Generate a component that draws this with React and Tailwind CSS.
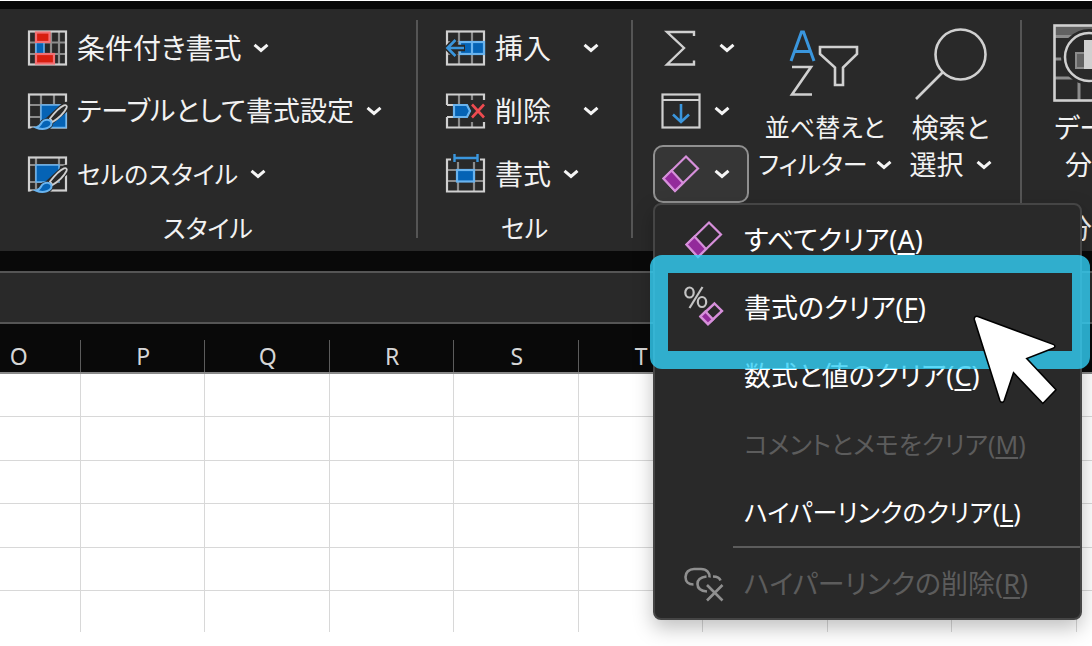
import React from "react";

const LIGHT = "#d0d0d0";
const MID = "#8c8c8c";
const BLUE = "#0563b5";
const SKY = "#69b3ee";
const DARK = "#292929";

function Chevron() {
  return (
    <svg viewBox="0 0 16 10" className="h-[10px] w-4 shrink-0" fill="none" stroke="#f5f5f5" strokeWidth="3">
      <path d="M1.5 1.8 8 7.5 14.5 1.8" />
    </svg>
  );
}

function GridIcon({ children }) {
  return (
    <svg viewBox="0 0 40 40" className="size-10 shrink-0 overflow-visible" fill="none" strokeWidth="2.2">
      {children}
    </svg>
  );
}

function Brush() {
  return (
    <g>
      <path d="M40 12.500c-3-1-6 1.500-9 4.500L18 29c-3 0-5 2-6 5-1 2-3 3-5 3.500 8 3 16 1 17-6L40 18z" fill={DARK} stroke={DARK} strokeWidth="3" />
      <path d="M22 27.500C27 21 32 16 36 14.300c2-.8 3.500.7 2.500 2.700C36 22 31 27 24.500 31z" fill={DARK} stroke={LIGHT} strokeWidth="1.8" />
      <path d="M8 36.500c4-.5 4.500-3 6-5.500 2.500-3.500 9-3 9.500.8.3 5-8 8-15.500 4.700z" fill={BLUE} stroke={SKY} strokeWidth="2" />
    </g>
  );
}

function ConditionalIcon() {
  return (
    <GridIcon>
      <path d="M8 3v34M23 3v34M31 3v34M1 14.500h38M1 26h38" stroke={MID} />
      <rect x="1" y="3.500" width="37" height="33" stroke={LIGHT} />
      <rect x="8" y="14.500" width="8" height="11.500" fill={BLUE} stroke={SKY} strokeWidth="1.500" />
      <rect x="8" y="4.500" width="13.500" height="9.500" fill="#d81e10" stroke="#f26f73" />
      <rect x="8" y="26" width="18" height="9.500" fill="#d81e10" stroke="#f26f73" />
    </GridIcon>
  );
}

function TableStyleIcon() {
  return (
    <GridIcon>
      <path d="M13 3v34M26 3v12M1 14h38M1 26h14" stroke={MID} />
      <rect x="1" y="3.500" width="37" height="33" stroke={LIGHT} />
      <rect x="13" y="14" width="25" height="22.500" fill={BLUE} stroke={SKY} strokeWidth="1.500" />
      <Brush />
    </GridIcon>
  );
}

function CellStyleIcon() {
  return (
    <GridIcon>
      <path d="M8 3v34M31 3v10M1 11h38M1 28h14" stroke={MID} />
      <rect x="1" y="3.500" width="37" height="33" stroke={LIGHT} />
      <rect x="8" y="11" width="23" height="17" fill={BLUE} stroke={SKY} strokeWidth="1.500" />
      <Brush />
    </GridIcon>
  );
}

function InsertIcon() {
  return (
    <GridIcon>
      <path d="M13 3v34M26 3v34M1 14h38M1 26h38" stroke={MID} />
      <rect x="1" y="3.500" width="37" height="33" stroke={LIGHT} />
      <rect x="14" y="14" width="24" height="12" fill={BLUE} stroke={SKY} />
      <path d="M26 14v12" stroke={SKY} />
      <path d="M19 20H3M10 12 2 20l8 8" stroke={DARK} strokeWidth="6.500" />
      <path d="M18 20H2M9.500 12 1.500 20l8 8" stroke="#3a96dd" strokeWidth="2.600" />
    </GridIcon>
  );
}

function DeleteIcon() {
  return (
    <GridIcon>
      <path d="M13 4v10M13 26v10M26 4v5M26 31v5" stroke={MID} />
      <path d="M1 14V3.500h37V9M1 14h13M1 26v10.500h37V31M1 26h13" stroke={LIGHT} />
      <path d="M8 14h13l3 6-3 6H8z" fill={BLUE} stroke={SKY} />
      <path d="m26 13.500 12 13M38 13.500l-12 13" stroke="#ef4b50" strokeWidth="2.600" />
    </GridIcon>
  );
}

function FormatIcon() {
  return (
    <GridIcon>
      <path d="M12 8v30M28 8v30M1 16h38M1 27h38" stroke={MID} />
      <path d="M5 5.500H1v32h37v-32h-4" stroke={LIGHT} />
      <rect x="11" y="16" width="17" height="11.500" fill={BLUE} stroke={SKY} />
      <path d="M8.500 0v8M31.500 0v8M8.500 4h23" stroke="#3a96dd" strokeWidth="2.400" />
    </GridIcon>
  );
}

function SigmaIcon() {
  return (
    <GridIcon>
      <path d="M33 8V4H6l17 16L6 36.500h27v-4" stroke={LIGHT} strokeWidth="2.400" />
    </GridIcon>
  );
}

function FillIcon() {
  return (
    <GridIcon>
      <rect x="1.500" y="3.500" width="37" height="33" stroke={LIGHT} />
      <path d="M1.500 9h37" stroke={LIGHT} />
      <path d="M20 13v18M12 23.500l8 7.500 8-7.500" stroke="#3a96dd" strokeWidth="2.600" />
    </GridIcon>
  );
}

function EraserIcon() {
  return (
    <GridIcon>
      <g stroke="#d68fda" strokeWidth="2.200">
        <path d="M25 2.500 37 14.500 14 37 2.500 24.500z" />
        <path d="M10.500 16.500 22 29 14 37 2.500 24.500z" fill="#932a9b" />
      </g>
    </GridIcon>
  );
}

function ClearFormatIcon() {
  return (
    <GridIcon>
      <g stroke="#c4c4c4" strokeWidth="2.200">
        <ellipse cx="5.500" cy="4.500" rx="4.200" ry="5" />
        <ellipse cx="18" cy="14" rx="4.200" ry="5" />
        <path d="M18.500-1 5.500 20" />
      </g>
      <g stroke="#d68fda" strokeWidth="2.400">
        <path d="M30.500 15.500 38 23 24 36 16.500 28.500z" />
        <path d="M21.500 23.500 29 31.500 24 36 16.500 28.500z" fill="#932a9b" />
      </g>
    </GridIcon>
  );
}

function UnlinkIcon() {
  return (
    <GridIcon>
      <g stroke="#8f8f8f" strokeWidth="2.600">
        <path d="M9.500 20.500C4.500 20.500 1.500 17.500 1.500 13S5 5 10 5h7c6 0 9 4 8.500 8.500" />
        <path d="M23 27.500c-6-.5-9.500-3-9.500-7.500 0-4.300 3.500-7 9-7.500" />
        <path d="M29 12.500c4 0 6.500 1 7.500 4" />
        <path d="m23 21 15.500 15.500M38.500 21 23 36.500" />
      </g>
    </GridIcon>
  );
}

function SortFilterIcon() {
  return (
    <svg viewBox="0 0 72 68" className="h-[68px] w-[72px]" fill="none">
      <path d="M2 32 12.500 3h2L25 32M6 22.500h15" stroke="#3a96dd" strokeWidth="3" />
      <path d="M3 38h19L3 65.500h20" stroke={LIGHT} strokeWidth="2.600" />
      <path d="M31 18h37v7L54 38.500V56h-8V38.500L31 25z" stroke={LIGHT} strokeWidth="2.600" />
    </svg>
  );
}

function FindIcon() {
  return (
    <svg viewBox="0 0 74 74" className="size-[74px]" fill="none" stroke={LIGHT} strokeWidth="2.600">
      <circle cx="46.500" cy="28.500" r="25" />
      <path d="M28.500 46.500 2 73" />
    </svg>
  );
}

function AnalyzeIcon() {
  return (
    <svg viewBox="0 0 78 78" className="size-[78px] shrink-0" fill="none">
      <rect x="2" y="2" width="74" height="10" fill="#626262" />
      <path d="M2 12.500h74M2 54h74M26 54v23M2 35h74" stroke={MID} strokeWidth="3" />
      <rect x="1.500" y="1.500" width="75" height="75" stroke={LIGHT} strokeWidth="2.600" />
      <circle cx="36" cy="33" r="28" fill={DARK} />
      <circle cx="36" cy="33" r="24" stroke={LIGHT} strokeWidth="2.500" />
      <rect x="23" y="29" width="9" height="15" fill="#626262" stroke={MID} strokeWidth="2" />
      <rect x="31" y="16" width="13" height="29" fill={LIGHT} />
    </svg>
  );
}

function Pointer() {
  return (
    <svg viewBox="0 0 88 94" className="pointer-events-none absolute top-[109px] left-[317px] h-[92px] w-[86px]">
      <path
        d="M6 2.500 83 31c2.500 1 2.500 3 0 4L56 45.500 86 77.500 72.500 91.500 42.500 60 33 88.500c-1 2.500-3.500 2.500-4.500 0L2.500 6C1.800 3.500 3.500 1.700 6 2.500z"
        fill="#fff"
        stroke="#000"
        strokeWidth="1.600"
      />
    </svg>
  );
}

function MenuButton({ icon, label, size = "text-[28px]" }) {
  return (
    <button className={"flex h-[63px] items-center whitespace-nowrap " + size}>
      {icon}
      <span className="ml-[9px]">{label}</span>
      <span className="ml-3 flex">
        <Chevron />
      </span>
    </button>
  );
}

function SplitButton({ icon, label }) {
  return (
    <div className="flex h-[63px] items-center">
      <button className="flex items-center">
        {icon}
        <span className="ml-[9px]">{label}</span>
      </button>
      <button className="ml-8 flex" aria-label={label + "のオプション"}>
        <Chevron />
      </button>
    </div>
  );
}

function IconSplit({ icon, name, wide }) {
  return (
    <div className={"flex h-[63px] items-center pl-2 " + (wide ? "gap-[18px]" : "gap-[13px]")}>
      <button aria-label={name}>{icon}</button>
      <button aria-label={name + "のオプション"}>
        <Chevron />
      </button>
    </div>
  );
}

function TallButton({ icon, first, second, chevron, size = "text-[27px]", gap = "gap-3" }) {
  return (
    <button className={"flex flex-col items-center whitespace-nowrap leading-[37px] " + size}>
      <span className="flex h-[93px] items-center">{icon}</span>
      <span>{first}</span>
      <span className={"flex items-center " + gap}>
        {second}
        {chevron && <Chevron />}
      </span>
    </button>
  );
}

function Divider() {
  return <div className="mt-1 mb-[13px] w-0.5 shrink-0 bg-[#555555]" />;
}

function GroupLabel({ children }) {
  return <div className="flex h-[46px] items-center justify-center">{children}</div>;
}

function MenuItem({ icon, label, mnemonic, disabled, size = "text-[27px]" }) {
  return (
    <button
      role="menuitem"
      disabled={disabled}
      className={
        "flex h-[68px] w-full items-center gap-5 pl-[29px] text-left whitespace-nowrap text-white disabled:text-[#5c5c5c] " + size
      }
    >
      <span className="size-10 shrink-0">{icon}</span>
      <span>
        {label}(<span className="underline decoration-2 underline-offset-3">{mnemonic}</span>)
      </span>
    </button>
  );
}

function ClearMenu() {
  return (
    <div
      role="menu"
      className="absolute top-full left-0 z-10 w-[429px] rounded-lg border-2 border-[#454545] bg-[#292929] pt-px shadow-[0_8px_20px_rgba(0,0,0,0.25)]"
    >
      <MenuItem icon={<EraserIcon />} label="すべてクリア" mnemonic="A" />
      <MenuItem icon={<ClearFormatIcon />} label="書式のクリア" mnemonic="F" />
      <MenuItem label="数式と値のクリア" mnemonic="C" />
      <MenuItem label="コメントとメモをクリア" mnemonic="M" size="text-[25px]" disabled />
      <MenuItem label="ハイパーリンクのクリア" mnemonic="L" size="text-[25px]" />
      <div className="mb-0.5 ml-[78px] h-0.5 bg-[#5c5c5c]" />
      <MenuItem icon={<UnlinkIcon />} label="ハイパーリンクの削除" mnemonic="R" size="text-[27px]" disabled />
      <div className="pointer-events-none absolute top-[50px] -right-[10px] -left-[5px] h-[114px] rounded-xl border-[18px] border-[rgba(50,207,246,0.8)]" />
      <Pointer />
    </div>
  );
}

function Ribbon() {
  return (
    <header className="flex overflow-x-clip bg-[#292929] pt-[7px] text-[28px] leading-9 text-[#f2f2f2]">
      <section className="w-[416px] shrink-0">
        <div className="flex flex-col items-start pl-7">
          <MenuButton icon={<ConditionalIcon />} label="条件付き書式" />
          <MenuButton icon={<TableStyleIcon />} label="テーブルとして書式設定" size="text-[27px]" />
          <MenuButton icon={<CellStyleIcon />} label="セルのスタイル" size="text-[25px]" />
        </div>
        <div className="text-[25px]">
          <GroupLabel>スタイル</GroupLabel>
        </div>
      </section>
      <Divider />
      <section className="w-[213px] shrink-0">
        <div className="flex flex-col items-start pl-7">
          <SplitButton icon={<InsertIcon />} label="挿入" />
          <SplitButton icon={<DeleteIcon />} label="削除" />
          <MenuButton icon={<FormatIcon />} label="書式" />
        </div>
        <div className="text-[25px]">
          <GroupLabel>セル</GroupLabel>
        </div>
      </section>
      <Divider />
      <section className="flex w-[387px] shrink-0 items-start pl-5">
        <div className="w-24 shrink-0">
          <IconSplit icon={<SigmaIcon />} name="合計" wide />
          <IconSplit icon={<FillIcon />} name="フィル" />
          <div className="relative flex h-[63px] items-center">
            <div className="relative w-full">
              <button
                aria-label="クリア"
                aria-haspopup="menu"
                aria-expanded="true"
                className="flex h-[58px] w-full items-center gap-[13px] rounded-[10px] border-2 border-[#909090] bg-[#363636] pl-1.5"
              >
                <EraserIcon />
                <Chevron />
              </button>
              <ClearMenu />
            </div>
          </div>
        </div>
        <div className="flex grow gap-[18px] pl-[9px]">
          <TallButton icon={<SortFilterIcon />} first="並べ替えと" second="フィルター" size="text-[25px]" gap="gap-2" chevron />
          <TallButton icon={<FindIcon />} first="検索と" second="選択" chevron />
        </div>
      </section>
      <Divider />
      <section className="shrink-0 px-[31px]">
        <div className="h-[189px]">
          <TallButton icon={<AnalyzeIcon />} first="データ" second="分析" />
        </div>
        <GroupLabel>分析</GroupLabel>
      </section>
    </header>
  );
}

const COLUMNS = ["O", "P", "Q", "R", "S", "T", "U", "V", "W", "X"];
const ROW_HEIGHTS = ["h-[43px]", "h-[44px]", "h-[43px]", "h-[44px]", "h-[43px]", "h-[41px]"];

function Sheet() {
  return (
    <div className="overflow-hidden">
      <table className="-ml-11 w-[1245px] table-fixed border-separate border-spacing-0">
        <thead className="bg-[#090909] text-[23px] leading-8 text-[#d6d6d6]">
          <tr>
            {COLUMNS.map((c) => (
              <th key={c} className="h-[49px] border-b-2 border-[#8a8a8a] p-0 font-normal">
                <div className="mt-4 border-r border-[#5c5c5c] pl-0.5">{c}</div>
              </th>
            ))}
          </tr>
        </thead>
        <tbody>
          {ROW_HEIGHTS.map((height, r) => (
            <tr key={r} className={height}>
              {COLUMNS.map((c) => (
                <td
                  key={c}
                  className={"border-r border-[#d8d8d8] p-0 " + (r < ROW_HEIGHTS.length - 1 ? "border-b" : "")}
                />
              ))}
            </tr>
          ))}
        </tbody>
      </table>
    </div>
  );
}

export default function App() {
  return (
    <div className="min-h-screen overflow-x-clip bg-white font-['Noto_Sans','Noto_Sans_CJK_JP',sans-serif] [font-feature-settings:'palt']">
      <div className="mt-px h-2 bg-[#090909]" />
      <Ribbon />
      <div className="h-5 bg-[#090909]" />
      <div className="h-[53px] border-y-2 border-[#555555] bg-[#292929]" />
      <Sheet />
    </div>
  );
}
